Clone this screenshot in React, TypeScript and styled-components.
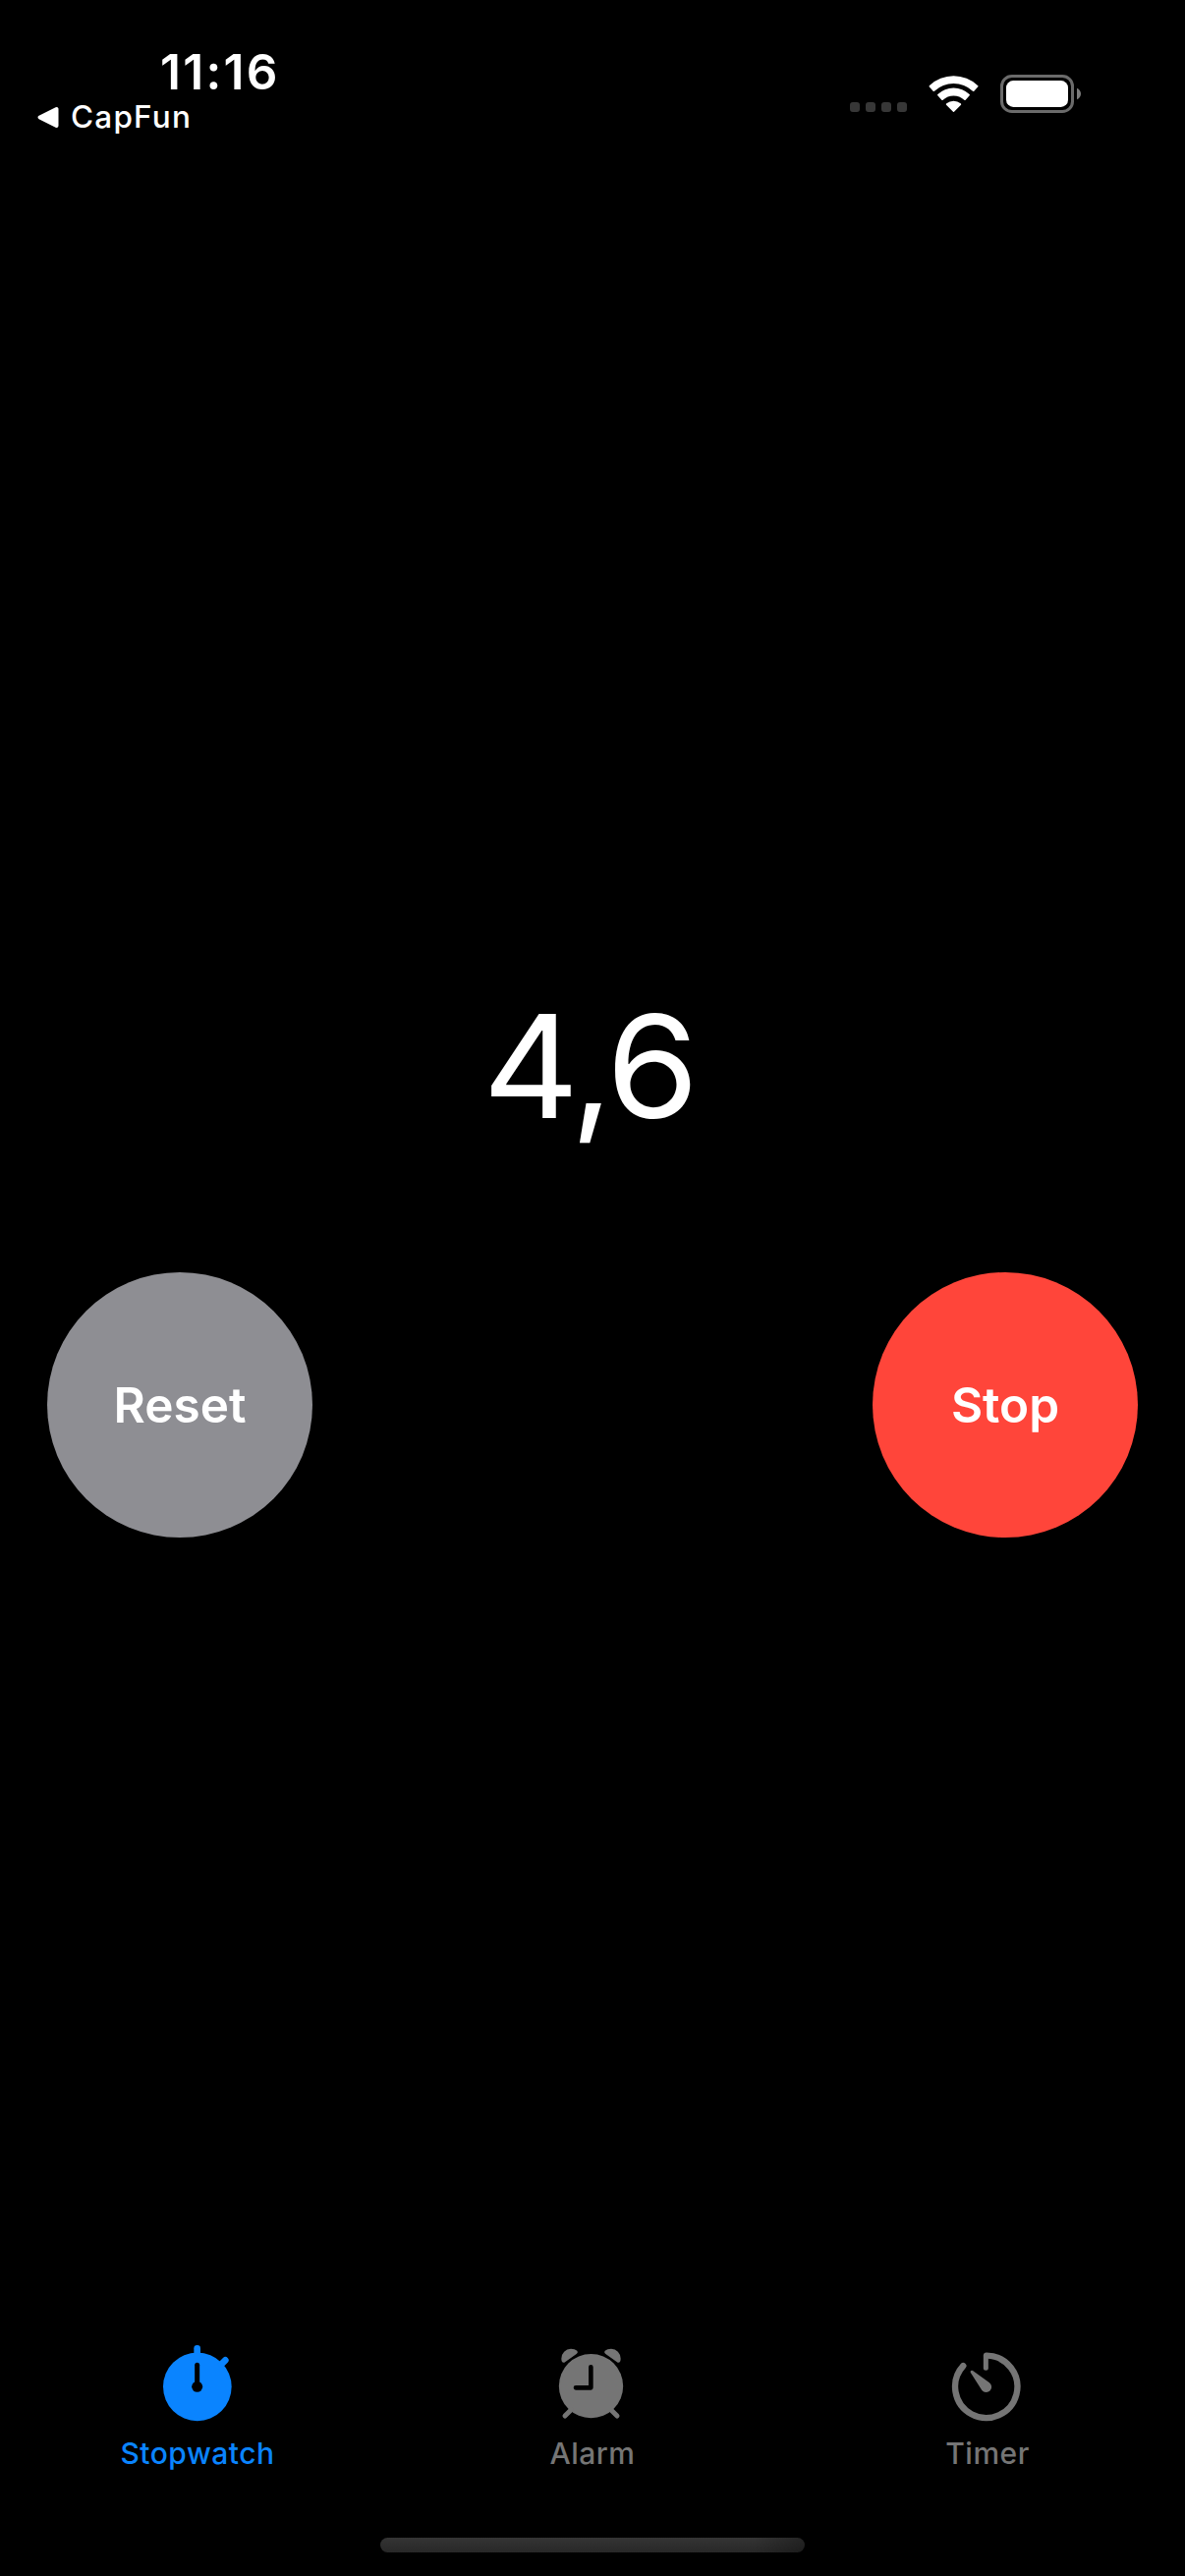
import React from "react";
import styled, { createGlobalStyle } from "styled-components";

const GlobalStyle = createGlobalStyle`
  *, *::before, *::after { box-sizing: border-box; }
  body {
    margin: 0;
    background: #000;
    font-family: Inter, "Liberation Sans", sans-serif;
  }
`;

const Screen = styled.div`
  display: flex;
  flex-direction: column;
  width: 1206px;
  height: 2622px;
  background: #000;
  color: #fff;
  overflow: hidden;
`;

const StatusBar = styled.header`
  display: flex;
  justify-content: space-between;
  align-items: flex-start;
  height: 177px;
  padding: 43px 105px 0 37px;
`;

const StatusLeft = styled.div`
  display: flex;
  flex-direction: column;
  align-items: flex-start;
`;

const Clock = styled.time`
  margin-left: 126px;
  font-size: 49.5px;
  font-weight: 600;
  line-height: 60px;
  letter-spacing: 2.3px;
`;

const BackLink = styled.a`
  display: flex;
  align-items: center;
  gap: 11px;
  height: 31px;
  font-size: 31.5px;
  font-weight: 500;
  line-height: 31px;
  letter-spacing: 1.2px;
`;

const StatusRight = styled.div`
  display: flex;
  align-items: flex-end;
  padding-top: 32px;
`;

const SignalDots = styled.div`
  display: flex;
  gap: 6px;
  margin: 0 22px 2px 0;
`;

const SignalDot = styled.span`
  width: 10px;
  height: 10px;
  border-radius: 3px;
  background: #373737;
`;

const WifiIcon = styled.svg`
  width: 52px;
  height: 39px;
  margin: 0 20px 1px 0;
`;

const BatteryIcon = styled.svg`
  width: 84px;
  height: 41px;
`;

const Main = styled.main`
  display: flex;
  flex: 1;
  flex-direction: column;
  padding: 818px 48px 0;
`;

const Elapsed = styled.div`
  height: 180px;
  padding-right: 7px;
  font-size: 145.5px;
  font-weight: 400;
  line-height: 180px;
  letter-spacing: -3.5px;
  text-align: center;
  transform: scaleX(1.045);
`;

const Controls = styled.div`
  display: flex;
  justify-content: space-between;
  margin-top: 120px;
`;

const RoundButton = styled.button<{ $color: string }>`
  width: 270px;
  height: 270px;
  padding: 0;
  border: 0;
  border-radius: 50%;
  background: ${(p) => p.$color};
  color: #fff;
  font-family: inherit;
  font-size: 49.5px;
  font-weight: 600;
  line-height: 60px;
`;

const TabBar = styled.nav`
  display: grid;
  grid-template-columns: repeat(3, 1fr);
  height: 207px;
`;

const Tab = styled.a<{ $active?: boolean }>`
  display: flex;
  flex-direction: column;
  align-items: center;
  color: ${(p) => (p.$active ? "#0a84ff" : "#757575")};
`;

const TabIcon = styled.svg`
  width: 90px;
  height: 90px;
`;

const TabLabel = styled.span`
  margin-top: 13px;
  font-size: 30px;
  font-weight: 500;
  line-height: 36px;
  letter-spacing: 0.5px;
`;

const HomeArea = styled.footer`
  display: flex;
  justify-content: center;
  height: 39px;
`;

const HomeIndicator = styled.div`
  width: 432px;
  height: 15px;
  border-radius: 8px;
  background: linear-gradient(90deg, transparent 88%, rgba(0, 0, 0, 0.3)),
    linear-gradient(#343434, #282828);
`;

function StopwatchIcon() {
  return (
    <TabIcon viewBox="138 18 270 270" fill="none" strokeLinecap="round">
      <circle cx="272.5" cy="178" r="104.5" fill="currentColor" />
      <path d="M272 61V84" stroke="currentColor" strokeWidth="20" />
      <path d="M358 97L346 109" stroke="currentColor" strokeWidth="20" />
      <path d="M272 112V178" stroke="#000" strokeWidth="15" />
      <circle cx="272" cy="178" r="16.5" fill="#000" />
    </TabIcon>
  );
}

function AlarmIcon() {
  return (
    <TabIcon viewBox="54 18 270 270" fill="none" strokeLinecap="round">
      <circle cx="184.5" cy="176" r="98" fill="currentColor" />
      <path d="M124 248L105 267M245 248L264 267" stroke="currentColor" strokeWidth="15" />
      <path
        d="M103 104Q94 106 94 92A30 30 0 0 1 123 62Q135 62 142 68Q146 73 141 77Z"
        fill="currentColor"
      />
      <path
        d="M266 104Q275 106 275 92A30 30 0 0 0 246 62Q234 62 227 68Q223 73 228 77Z"
        fill="currentColor"
      />
      <path d="M184 118V181H138" stroke="#000" strokeWidth="14" strokeLinejoin="round" />
    </TabIcon>
  );
}

function TimerIcon() {
  return (
    <TabIcon viewBox="60 18 270 270" fill="none" strokeLinecap="round">
      <path d="M192 83A95 95 0 1 1 121 114" stroke="currentColor" strokeWidth="19" />
      <path d="M190 121V84" stroke="currentColor" strokeWidth="15" />
      <path
        d="M143 134A4.5 4.5 0 0 1 150 129L200 165A16.5 16.5 0 1 1 178 189Z"
        fill="currentColor"
      />
    </TabIcon>
  );
}

export default function App() {
  return (
    <>
      <GlobalStyle />
      <Screen>
        <StatusBar>
          <StatusLeft>
            <Clock>11:16</Clock>
            <BackLink>
              <svg width="24" height="24" viewBox="0 0 24 24">
                <path
                  d="M3.500 12.500L20.500 4V21Z"
                  fill="#fff"
                  stroke="#fff"
                  strokeWidth="4"
                  strokeLinejoin="round"
                />
              </svg>
              CapFun
            </BackLink>
          </StatusLeft>
          <StatusRight>
            <SignalDots>
              <SignalDot />
              <SignalDot />
              <SignalDot />
              <SignalDot />
            </SignalDots>
            <WifiIcon viewBox="285 48 156 117" fill="#fff">
              <path d="M287 85Q286 83 288 81A107 107 0 0 1 435 81Q438 83 436 85L424 98Q422 100 420 98A86 86 0 0 0 303 98Q301 100 299 98Z" />
              <path d="M313 112Q311 110 313 108A70 70 0 0 1 410 108Q412 110 410 112L398 125Q396 127 394 125A48 48 0 0 0 329 125Q327 127 325 125Z" />
              <path d="M339 140Q337 138 340 136A33 33 0 0 1 383 136Q386 138 384 140L363 161Q361.500 163 360 161Z" />
            </WifiIcon>
            <BatteryIcon viewBox="501 45 252 123">
              <rect
                x="508.500"
                y="52.500"
                width="216"
                height="108"
                rx="31"
                fill="none"
                stroke="#6b6b6b"
                strokeWidth="9"
              />
              <rect x="522" y="66" width="189" height="81" rx="22" fill="#fff" />
              <path d="M738 89Q750 95 750 106.500Q750 118 738 124Z" fill="#7c7c7c" />
            </BatteryIcon>
          </StatusRight>
        </StatusBar>
        <Main>
          <Elapsed>4,6</Elapsed>
          <Controls>
            <RoundButton $color="#8e8e93">Reset</RoundButton>
            <RoundButton $color="#ff453a">Stop</RoundButton>
          </Controls>
        </Main>
        <TabBar>
          <Tab $active>
            <StopwatchIcon />
            <TabLabel>Stopwatch</TabLabel>
          </Tab>
          <Tab>
            <AlarmIcon />
            <TabLabel>Alarm</TabLabel>
          </Tab>
          <Tab>
            <TimerIcon />
            <TabLabel>Timer</TabLabel>
          </Tab>
        </TabBar>
        <HomeArea>
          <HomeIndicator />
        </HomeArea>
      </Screen>
    </>
  );
}
